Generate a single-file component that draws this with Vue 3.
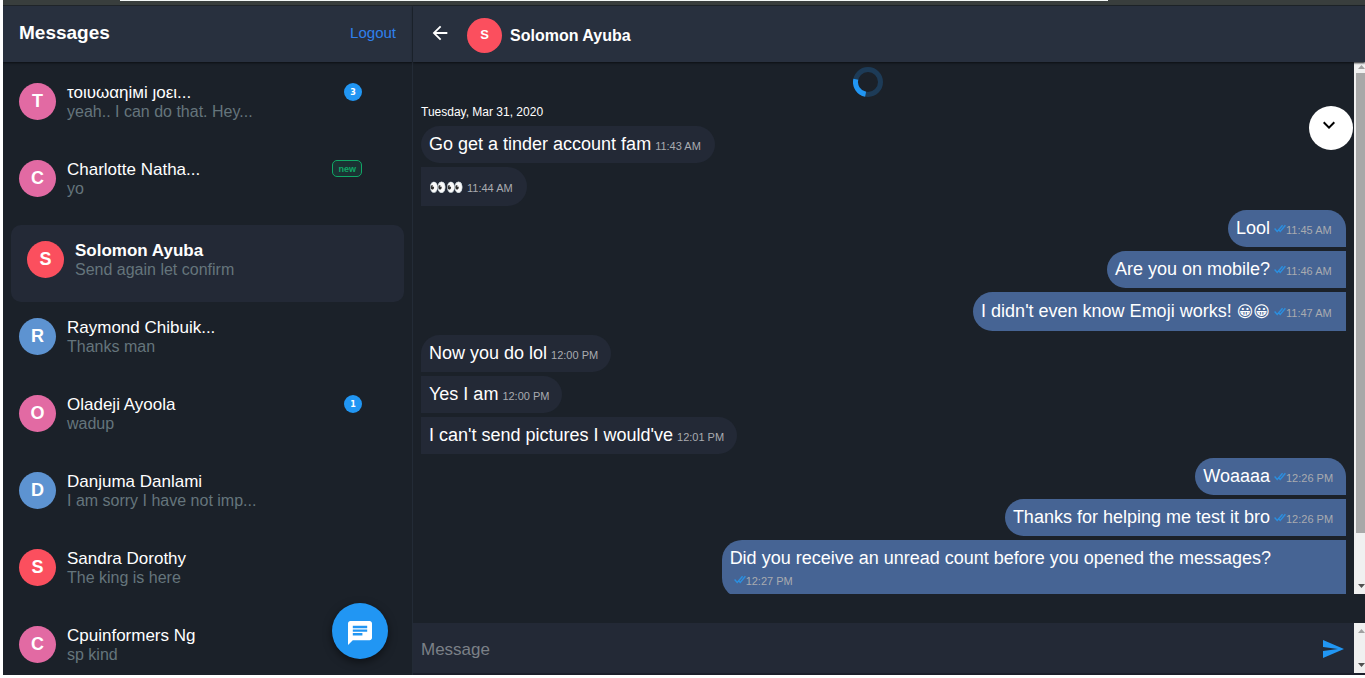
<script setup>
import { ref } from 'vue'

const draft = ref('')

const chats = [
  { initial: 'T', tone: 'pink', name: 'τοιυωαηiмi ȷοει...', preview: 'yeah.. I can do that. Hey...', unread: 3 },
  { initial: 'C', tone: 'pink', name: 'Charlotte Natha...', preview: 'yo', fresh: true },
  { initial: 'S', tone: 'red', name: 'Solomon Ayuba', preview: 'Send again let confirm', active: true },
  { initial: 'R', tone: 'blue', name: 'Raymond Chibuik...', preview: 'Thanks man' },
  { initial: 'O', tone: 'pink', name: 'Oladeji Ayoola', preview: 'wadup', unread: 1 },
  { initial: 'D', tone: 'blue', name: 'Danjuma Danlami', preview: 'I am sorry I have not imp...' },
  { initial: 'S', tone: 'red', name: 'Sandra Dorothy', preview: 'The king is here' },
  { initial: 'C', tone: 'pink', name: 'Cpuinformers Ng', preview: 'sp kind' },
]

const messages = [
  { text: 'Go get a tinder account fam', time: '11:43 AM', shape: 'in lone' },
  { text: '', eyes: '👀👀', time: '11:44 AM', shape: 'in tall' },
  { text: 'Lool', time: '11:45 AM', mine: true, shape: 'out first' },
  { text: 'Are you on mobile?', time: '11:46 AM', mine: true, shape: 'out' },
  { text: "I didn't even know Emoji works! ", faces: '😀😀', time: '11:47 AM', mine: true, shape: 'out tall' },
  { text: 'Now you do lol', time: '12:00 PM', shape: 'in first' },
  { text: 'Yes I am', time: '12:00 PM', shape: 'in' },
  { text: "I can't send pictures I would've", time: '12:01 PM', shape: 'in' },
  { text: 'Woaaaa', time: '12:26 PM', mine: true, shape: 'out first' },
  { text: 'Thanks for helping me test it bro', time: '12:26 PM', mine: true, shape: 'out' },
  { text: 'Did you receive an unread count before you opened the messages?', time: '12:27 PM', mine: true, shape: 'out' },
]
</script>

<template>
  <div class="window">
    <div class="browser-edge"><div class="address-edge"></div></div>
    <div class="app">
      <aside class="sidebar">
        <header class="bar sidebar-bar">
          <h1>Messages</h1>
          <a href="#" class="logout">Logout</a>
        </header>
        <ul class="chats">
          <li v-for="chat in chats" :key="chat.name" class="chat" :class="{ active: chat.active }">
            <span class="avatar" :class="chat.tone">{{ chat.initial }}</span>
            <div class="summary">
              <div class="name">{{ chat.name }}</div>
              <div class="preview">{{ chat.preview }}</div>
            </div>
            <span v-if="chat.unread" class="count">{{ chat.unread }}</span>
            <span v-if="chat.fresh" class="fresh">new</span>
          </li>
        </ul>
        <button class="compose" type="button" aria-label="New message">
          <svg width="24" height="24" viewBox="2 2 20 20" fill="currentColor">
            <path d="M20 2H4c-1.1 0-1.99.9-1.99 2L2 22l4-4h14c1.1 0 2-.9 2-2V4c0-1.1-.9-2-2-2zM6 9h12v2H6V9zm8 5H6v-2h8v2zm4-6H6V6h12v2z" />
          </svg>
        </button>
      </aside>

      <main class="conversation">
        <header class="bar chat-bar">
          <button class="back" type="button" aria-label="Back">
            <svg width="22" height="22" viewBox="0 0 24 24" fill="currentColor">
              <path d="M20 11H7.83l5.59-5.59L12 4l-8 8 8 8 1.41-1.41L7.83 13H20v-2z" />
            </svg>
          </button>
          <div class="peer">
            <span class="avatar small red">S</span>
            <h2>Solomon Ayuba</h2>
          </div>
        </header>

        <section class="thread">
          <div class="stream">
            <svg class="spinner" width="30" height="30" viewBox="0 0 30 30" fill="none" stroke-width="5">
              <circle cx="15" cy="15" r="12.5" stroke="#1d3b57" />
              <path d="M2.8 12.2A12.5 12.5 0 0 0 12.6 27.3" stroke="#2196f3" />
            </svg>
            <time class="day">Tuesday, Mar 31, 2020</time>
            <div v-for="(m, i) in messages" :key="i" class="bubble" :class="m.shape">{{ m.text }}<span v-if="m.eyes" class="eyes">{{ m.eyes }}</span><span v-if="m.faces" class="faces">{{ m.faces }}</span><span class="meta"><svg v-if="m.mine" class="ticks" width="12" height="9" viewBox="0 0 12 9" fill="none" stroke="#2b8fe0" stroke-width="1.4"><path d="M.6 4.6L3.2 7.4L8.6 1.2M4.4 5.6L6.2 7.4L11.4 1.2" /></svg>{{ m.time }}</span></div>
          </div>
          <div class="scrollbar">
            <svg width="11" height="11" viewBox="0 0 11 11"><path d="M4 7h7L7.500 3z" fill="#a0a0a0" /></svg>
            <div class="thumb"></div>
            <svg width="11" height="11" viewBox="0 0 11 11"><path d="M4 1h7L7.500 5z" fill="#505050" /></svg>
          </div>
          <button class="jump" type="button" aria-label="Scroll to latest">
            <svg width="24" height="24" viewBox="0 0 24 24" fill="currentColor">
              <path d="M16.590 8.590L12 13.170 7.410 8.590 6 10l6 6 6-6z" />
            </svg>
          </button>
        </section>

        <form class="composer" @submit.prevent>
          <textarea v-model="draft" rows="1" placeholder="Message" aria-label="Message"></textarea>
          <button class="send" type="submit" aria-label="Send">
            <svg width="24" height="24" viewBox="0 0 24 24" fill="currentColor">
              <path d="M2.010 21L23 12 2.010 3 2 10l15 2-15 2z" />
            </svg>
          </button>
          <div class="scrollbar">
            <svg width="11" height="11" viewBox="0 0 11 11"><path d="M4 10h7L7.500 6z" fill="#a0a0a0" /></svg>
            <svg width="11" height="11" viewBox="0 0 11 11"><path d="M4 1h7L7.500 5z" fill="#505050" /></svg>
          </div>
        </form>
      </main>
    </div>
  </div>
</template>

<style>
body {
  background: #fff;
}
</style>

<style scoped>
* {
  box-sizing: border-box;
}
.window {
  display: flex;
  flex-direction: column;
  height: 100vh;
  padding: 0 0 3px 3px;
  font-family: "Liberation Sans", "DejaVu Sans", sans-serif;
  color: #fff;
}
button {
  display: flex;
  align-items: center;
  justify-content: center;
  padding: 0;
  border: 0;
  background: none;
  color: #fff;
}
h1,
h2,
ul {
  margin: 0;
  padding: 0;
}
.browser-edge {
  height: 6px;
  flex: none;
  padding: 0 257px 0 117px;
  background: #393e3d;
  border-bottom: 1px solid #1f2429;
}
.address-edge {
  height: 1px;
  background: #f4f8f7;
}
.app {
  display: flex;
  flex: 1;
  min-height: 0;
  background: #1b2129;
}
.sidebar {
  position: relative;
  display: flex;
  flex-direction: column;
  flex: 0 0 410px;
  overflow: hidden;
  border-right: 1px solid #232b36;
}
.bar {
  display: flex;
  align-items: center;
  flex: none;
  height: 56px;
  background: #28303e;
  box-shadow: 0 1px 2px #0c0f13;
}
.sidebar-bar {
  justify-content: space-between;
  padding: 0 16px 3px;
}
h1 {
  font-size: 19px;
  line-height: 22px;
}
.logout {
  font-size: 15px;
  color: #2f80ed;
  text-decoration: none;
}
.chats {
  padding-top: 5px;
  list-style: none;
}
.chat {
  display: flex;
  align-items: flex-start;
  height: 77px;
  padding: 16px 50px 0 16px;
}
.chat.active {
  margin: 4px 8px 0;
  border-radius: 10px;
  background: #232936;
}
.avatar {
  display: flex;
  align-items: center;
  justify-content: center;
  flex: none;
  width: 37px;
  height: 37px;
  border-radius: 50%;
  font-size: 18px;
  font-weight: bold;
}
.avatar.small {
  width: 35px;
  height: 35px;
  padding-bottom: 3px;
  font-size: 13px;
}
.pink {
  background: #e26aa3;
}
.red {
  background: #fb4f5e;
}
.blue {
  background: #5d93d1;
}
.summary {
  flex: 1;
  min-width: 0;
  margin-left: 11px;
  line-height: 19px;
  white-space: nowrap;
}
.name {
  height: 19px;
  font-size: 17px;
}
.active .name {
  font-weight: bold;
}
.preview {
  font-size: 16px;
  color: #65757c;
}
.count {
  width: 18px;
  height: 18px;
  border-radius: 50%;
  background: #2196f3;
  font: bold 8px/19px "DejaVu Sans", sans-serif;
  text-align: center;
}
.fresh {
  height: 17px;
  padding: 0 5px;
  border: 1px solid #10a766;
  border-radius: 5px;
  background: #1b3233;
  color: #10a766;
  font-size: 9px;
  font-weight: bold;
  line-height: 16px;
}
.compose {
  position: absolute;
  right: 24px;
  bottom: 16px;
  width: 56px;
  height: 56px;
  padding-top: 3px;
  border-radius: 50%;
  background: #2196f3;
  box-shadow: 0 3px 8px rgba(0, 0, 0, 0.5);
}
.conversation {
  display: flex;
  flex-direction: column;
  flex: 1;
  min-width: 0;
}
.chat-bar {
  z-index: 1;
  padding-left: 16px;
}
.back {
  padding-bottom: 2px;
}
.peer {
  display: flex;
  align-items: center;
  gap: 8px;
  margin-left: 16px;
  padding-top: 3px;
}
h2 {
  font-size: 16px;
}
.thread {
  position: relative;
  display: flex;
  flex: 1;
  min-height: 0;
  margin-bottom: 29px;
}
.stream {
  display: flex;
  flex-direction: column;
  align-items: flex-start;
  gap: 4px;
  flex: 1;
  min-width: 0;
  padding: 5px 8px 0;
  overflow: hidden;
}
.stream > * {
  flex: none;
}
.spinner {
  align-self: center;
  margin-right: 32px;
}
.day {
  margin: 4px 0 3px;
  font-size: 12px;
  line-height: 14px;
}
.bubble {
  max-width: 67.5%;
  padding: 8px 12px 8px 8px;
  font-size: 18px;
  line-height: 21px;
}
.in {
  border-radius: 0 20px 20px 0;
  background: #232936;
}
.in.lone {
  border-radius: 20px;
}
.in.first {
  border-radius: 20px 20px 20px 0;
}
.out {
  align-self: flex-end;
  border-radius: 20px 0 0 20px;
  background: #466494;
}
.out.first {
  border-radius: 20px 20px 0 20px;
}
.bubble.tall {
  line-height: 23px;
}
.eyes {
  font-size: 14px;
  line-height: 14px;
}
.faces {
  font-size: 16px;
  line-height: 16px;
}
.meta {
  display: inline-block;
  min-width: 48px;
  margin-left: 4px;
  font-size: 11px;
  line-height: 13px;
  color: #a9abb0;
  white-space: nowrap;
}
.out .meta {
  min-width: 60px;
}
.ticks {
  margin-bottom: 1px;
}
.scrollbar {
  display: flex;
  flex-direction: column;
  justify-content: space-between;
  flex: none;
  width: 11px;
  background: #f0f0f0;
}
.thumb {
  height: 86.4%;
  margin: 0 0 auto 2px;
  background: #a8a8a8;
}
.jump {
  position: absolute;
  top: 44px;
  right: 12px;
  width: 44px;
  height: 44px;
  padding: 0 4px 6px 0;
  border-radius: 50%;
  background: #fff;
  color: #000;
}
.composer {
  display: flex;
  flex: none;
  height: 52px;
  border-bottom: 2px solid #1b1f2b;
  background: #232936;
}
textarea {
  flex: 1;
  min-width: 0;
  padding: 16px 8px 14px;
  border: 0;
  outline: 0;
  resize: none;
  overflow: hidden;
  background: none;
  color: #fff;
  font: 17px/22px "Liberation Sans", sans-serif;
}
textarea::placeholder {
  color: #7b8087;
}
.send {
  width: 24px;
  margin-right: 9px;
  padding-top: 2px;
  color: #2196f3;
}
</style>
